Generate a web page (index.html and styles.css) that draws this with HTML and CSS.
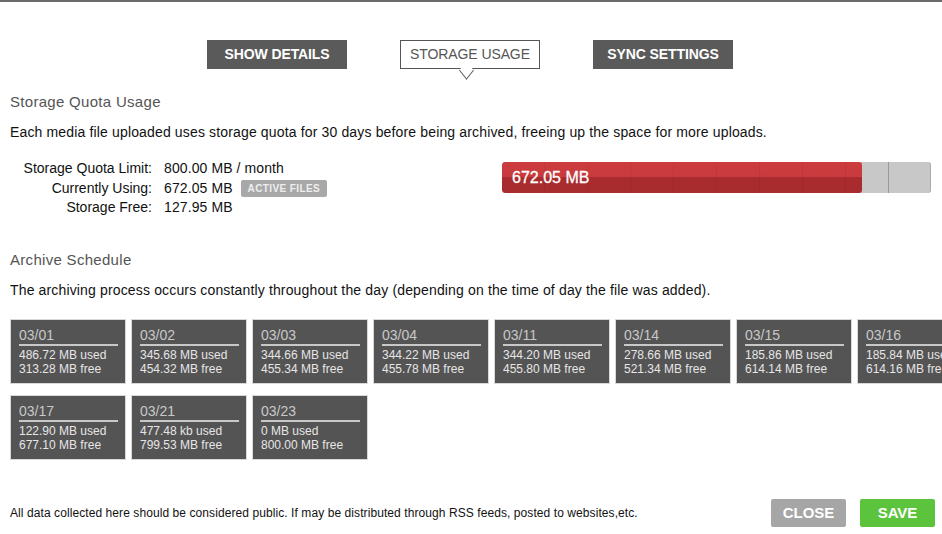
FILE: index.html
```html
<!DOCTYPE html>
<html>
<head>
<meta charset="utf-8">
<link rel="stylesheet" href="styles.css">
</head>
<body>
<div class="topline"></div>
<div class="page">
  <nav class="tabs">
    <div class="tab dark">SHOW DETAILS</div>
    <div class="tab active">STORAGE USAGE</div>
    <div class="tab dark">SYNC SETTINGS</div>
  </nav>

  <h2 class="heading h1">Storage Quota Usage</h2>
  <p class="para">Each media file uploaded uses storage quota for 30 days before being archived, freeing up the space for more uploads.</p>

  <div class="quota">
    <div class="stats">
      <div class="label">Storage Quota Limit:</div><div class="value">800.00 MB / month</div>
      <div class="label">Currently Using:</div><div class="value">672.05 MB <span class="badge">ACTIVE FILES</span></div>
      <div class="label">Storage Free:</div><div class="value">127.95 MB</div>
    </div>
    <div class="bar">
      <div class="fill" style="width:360px"><span>672.05 MB</span></div>
    </div>
  </div>

  <h2 class="heading h2">Archive Schedule</h2>
  <p class="para">The archiving process occurs constantly throughout the day (depending on the time of day the file was added).</p>

  <div class="tiles">
    <div class="tile"><div class="date">03/01</div><div class="info">486.72 MB used<br>313.28 MB free</div></div>
    <div class="tile"><div class="date">03/02</div><div class="info">345.68 MB used<br>454.32 MB free</div></div>
    <div class="tile"><div class="date">03/03</div><div class="info">344.66 MB used<br>455.34 MB free</div></div>
    <div class="tile"><div class="date">03/04</div><div class="info">344.22 MB used<br>455.78 MB free</div></div>
    <div class="tile"><div class="date">03/11</div><div class="info">344.20 MB used<br>455.80 MB free</div></div>
    <div class="tile"><div class="date">03/14</div><div class="info">278.66 MB used<br>521.34 MB free</div></div>
    <div class="tile"><div class="date">03/15</div><div class="info">185.86 MB used<br>614.14 MB free</div></div>
    <div class="tile last"><div class="date">03/16</div><div class="info">185.84 MB used<br>614.16 MB free</div></div>
    <div class="tile"><div class="date">03/17</div><div class="info">122.90 MB used<br>677.10 MB free</div></div>
    <div class="tile"><div class="date">03/21</div><div class="info">477.48 kb used<br>799.53 MB free</div></div>
    <div class="tile"><div class="date">03/23</div><div class="info">0 MB used<br>800.00 MB free</div></div>
  </div>

  <footer class="footer">
    <p class="note">All data collected here should be considered public. If may be distributed through RSS feeds, posted to websites,etc.</p>
    <div class="buttons">
      <button class="btn close">CLOSE</button>
      <button class="btn save">SAVE</button>
    </div>
  </footer>
</div>
</body>
</html>
```
FILE: styles.css
```css
html, body {
  margin: 0;
  padding: 0;
  width: 942px;
  height: 534px;
  overflow: hidden;
  background: #fff;
  font-family: "Liberation Sans", Arial, sans-serif;
  color: #111;
}
.topline {
  height: 2px;
  background: #6a6a6a;
}
.page {
  padding: 0 0 0 10px;
}
.tabs {
  display: flex;
  gap: 53px;
  padding: 38px 0 0 197px;
  height: 29px;
}
.tab {
  width: 140px;
  height: 29px;
  box-sizing: border-box;
  display: flex;
  align-items: center;
  justify-content: center;
  padding-bottom: 2px;
  font-size: 14px;
  letter-spacing: -0.1px;
}
.tab.dark {
  background: #5a5a5a;
  color: #fff;
  font-weight: bold;
}
.tab.active {
  background: #fff;
  border: 1px solid #555;
  color: #555;
  position: relative;
}
.tab.active::after {
  content: "";
  position: absolute;
  left: 59px;
  bottom: -9px;
  width: 12px;
  height: 12px;
  background: #fff;
  border-right: 1px solid #555;
  border-bottom: 1px solid #555;
  transform: scaleX(0.8) rotate(45deg);
}
.heading {
  margin: 0;
  font-weight: normal;
  font-size: 15px;
  letter-spacing: 0.3px;
  color: #555;
}
.h1 { margin-top: 24px; }
.h2 { margin-top: 33px; }
.para {
  margin: 14px 0 0;
  font-size: 14px;
  letter-spacing: 0.15px;
  color: #111;
}
.quota {
  display: flex;
  align-items: flex-start;
  margin-top: 19px;
}
.stats {
  display: grid;
  grid-template-columns: 142px auto;
  column-gap: 12px;
  row-gap: 0;
  font-size: 14px;
  line-height: 19.5px;
  width: 492px;
}
.label { text-align: right; }
.value { letter-spacing: 0.1px; }
.badge {
  display: inline-block;
  background: #a8a8a8;
  color: #eee;
  font-size: 10px;
  font-weight: bold;
  border-radius: 2px;
  padding: 0 7px;
  line-height: 17px;
  margin-left: 4px;
  vertical-align: 1px;
  letter-spacing: 0.4px;
}
.bar {
  margin-top: 3px;
  width: 429px;
  height: 31px;
  border-radius: 3px;
  background-color: #c8c8c8;
  background-image: repeating-linear-gradient(90deg, transparent 0, transparent 42px, #9a9a9a 42px, #9a9a9a 43px);
  border-right: 1px solid #aaa;
  box-sizing: border-box;
  overflow: hidden;
}
.fill {
  height: 100%;
  border-radius: 3px;
  background-image:
    repeating-linear-gradient(90deg, transparent 0, transparent 42px, rgba(0,0,0,0.06) 42px, rgba(0,0,0,0.06) 43px),
    linear-gradient(#cd3c3f 0, #c73a3d 50%, #a92b2e 50%, #a82b2d 100%);
  display: flex;
  align-items: center;
  padding-left: 10px;
  box-sizing: border-box;
}
.fill span {
  color: #fff;
  font-size: 16px;
  -webkit-text-stroke: 0.3px #fff;
}
.tiles {
  display: flex;
  flex-wrap: wrap;
  width: 975px;
  gap: 11px 5px;
  margin-top: 21px;
}
.tile {
  width: 116px;
  height: 65px;
  box-sizing: border-box;
  background: #545454;
  border: 1px solid #d8d8d8;
  padding: 7px 0 0 8px;
  color: #e4e4e4;
  white-space: nowrap;
  overflow: hidden;
}
.tile.last {
  width: 86px;
  border-right: none;
}
.date {
  font-size: 14px;
  color: #c8c8c8;
  line-height: 16px;
  border-bottom: 2px solid #c8c8c8;
  padding-bottom: 1px;
  width: 99px;
}
.info {
  font-size: 12px;
  line-height: 14px;
  margin-top: 2px;
  color: #e6e6e6;
}
.footer {
  display: flex;
  align-items: center;
  justify-content: space-between;
  margin-top: 39px;
  padding-right: 7px;
}
.note {
  margin: 0;
  font-size: 12px;
  letter-spacing: 0.08px;
  color: #111;
}
.buttons {
  display: flex;
  gap: 14px;
}
.btn {
  width: 75px;
  height: 28px;
  border: none;
  border-radius: 2px;
  color: #fff;
  font-family: "Liberation Sans", Arial, sans-serif;
  font-size: 15px;
  font-weight: bold;
  padding: 0;
}
.close { background: #a6a6a6; }
.save { background: #5cc43c; }
```
